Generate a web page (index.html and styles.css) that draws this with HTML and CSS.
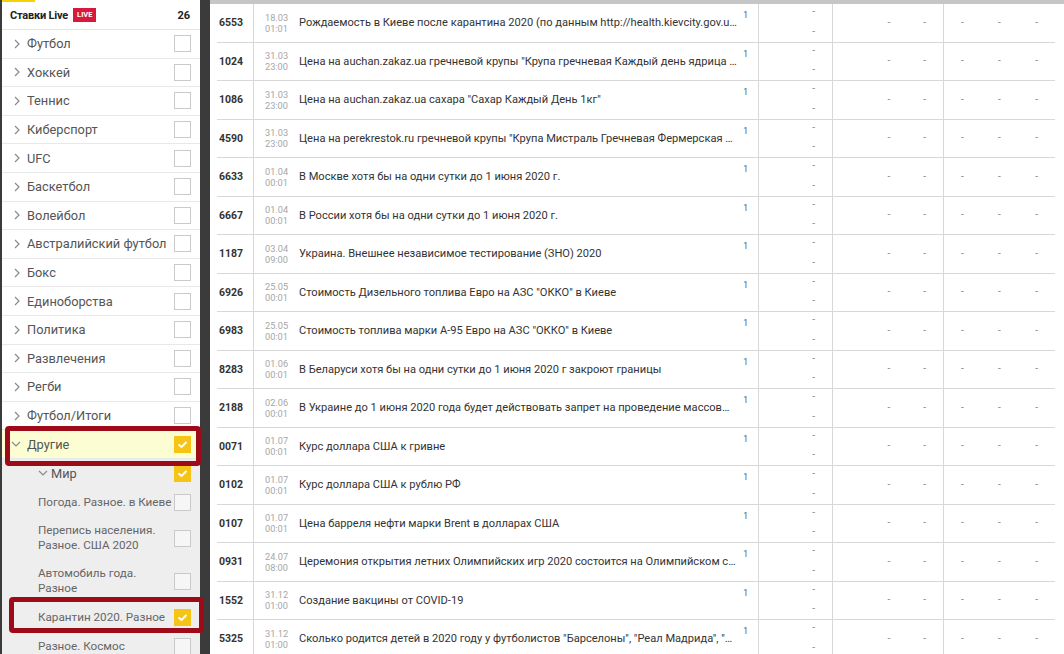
FILE: index.html
```html
<!DOCTYPE html>
<html lang="ru">
<head>
    <meta charset="UTF-8" />
    <title>Ставки Live</title>
    <link rel="stylesheet" href="styles.css">
</head>
<body>

    <aside class="sidebar">
        <div class="accent"></div>
        <div class="sb-head">
            <span class="sb-title">Ставки Live</span>
            <span class="live">LIVE</span>
            <span class="sb-count">26</span>
        </div>

        <ul class="sports" id="sports">
            <!-- Filled by JS -->
        </ul>

        <div class="mark mark-1"></div>
        <div class="mark mark-2"></div>
    </aside>

    <main class="events">
        <div class="rows" id="rows">
            <!-- Filled by JS -->
        </div>
    </main>

    <script>
    const arrowRight = '<svg class="chev" width="8" height="10" viewBox="0 0 8 10"><polyline points="2,1 6,5 2,9" fill="none" stroke="#8a8a8a" stroke-width="1.2"/></svg>';
    const arrowDown = '<svg class="chev" width="10" height="8" viewBox="0 0 10 8"><polyline points="1,2 5,6 9,2" fill="none" stroke="#8a8a8a" stroke-width="1.2"/></svg>';
    const tick = '<svg width="17" height="17" viewBox="0 0 17 17"><polyline points="4.5,8.5 7.5,11 12.5,6" fill="none" stroke="#fff" stroke-width="2"/></svg>';

    const sports = ["Футбол", "Хоккей", "Теннис", "Киберспорт", "UFC", "Баскетбол", "Волейбол",
      "Австралийский футбол", "Бокс", "Единоборства", "Политика", "Развлечения", "Регби", "Футбол/Итоги"];

    const subs = [
      { name: "Погода. Разное. в Киеве" },
      { name: "Перепись населения.<br>Разное. США 2020", tall: true },
      { name: "Автомобиль года.<br>Разное", tall: true },
      { name: "Карантин 2020. Разное", checked: true },
      { name: "Разное. Космос" }
    ];

    const events = [
      ["6553", "18.03", "01:01", "Рождаемость в Киеве после карантина 2020 (по данным http://health.kievcity.gov.ua)"],
      ["1024", "31.03", "23:00", "Цена на auchan.zakaz.ua гречневой крупы \"Крупа гречневая Каждый день ядрица 1кг\""],
      ["1086", "31.03", "23:00", "Цена на auchan.zakaz.ua сахара \"Сахар Каждый День 1кг\""],
      ["4590", "31.03", "23:00", "Цена на perekrestok.ru гречневой крупы \"Крупа Мистраль Гречневая Фермерская 900г\""],
      ["6633", "01.04", "00:01", "В Москве хотя бы на одни сутки до 1 июня 2020 г."],
      ["6667", "01.04", "00:01", "В России хотя бы на одни сутки до 1 июня 2020 г."],
      ["1187", "03.04", "09:00", "Украина. Внешнее независимое тестирование (ЗНО) 2020"],
      ["6926", "25.05", "00:01", "Стоимость Дизельного топлива Евро на АЗС \"ОККО\" в Киеве"],
      ["6983", "25.05", "00:01", "Стоимость топлива марки А-95 Евро на АЗС \"ОККО\" в Киеве"],
      ["8283", "01.06", "00:01", "В Беларуси хотя бы на одни сутки до 1 июня 2020 г закроют границы"],
      ["2188", "02.06", "00:01", "В Украине до 1 июня 2020 года будет действовать запрет на проведение массовых мероприятий"],
      ["0071", "01.07", "00:01", "Курс доллара США к гривне"],
      ["0102", "01.07", "00:01", "Курс доллара США к рублю РФ"],
      ["0107", "01.07", "00:01", "Цена барреля нефти марки Brent в долларах США"],
      ["0931", "24.07", "08:00", "Церемония открытия летних Олимпийских игр 2020 состоится на Олимпийском стадионе"],
      ["1552", "31.12", "01:00", "Создание вакцины от COVID-19"],
      ["5325", "31.12", "01:00", "Сколько родится детей в 2020 году у футболистов \"Барселоны\", \"Реал Мадрида\", \"Ювентуса\""]
    ];

    function box(checked) {
      return checked ? `<span class="check on">${tick}</span>` : '<span class="check"></span>';
    }

    function loadSidebar() {
      const list = document.getElementById("sports");
      let html = "";
      sports.forEach(name => {
        html += `<li class="sport">${arrowRight}<span class="label">${name}</span>${box(false)}</li>`;
      });
      html += `<li class="sport open">${arrowDown}<span class="label">Другие</span>${box(true)}</li>`;
      html += `<li class="sub world">${arrowDown}<span class="label">Мир</span>${box(true)}</li>`;
      subs.forEach(s => {
        html += `<li class="sub leaf${s.tall ? " tall" : ""}"><span class="label">${s.name}</span>${box(s.checked)}</li>`;
      });
      list.innerHTML = html;
    }

    function loadEvents() {
      const rows = document.getElementById("rows");
      events.forEach(ev => {
        const row = document.createElement("div");
        row.className = "row";
        row.innerHTML = `
          <div class="cell id">${ev[0]}</div>
          <div class="cell date">${ev[1]}<br>${ev[2]}</div>
          <div class="cell name"><span class="title">${ev[3]}</span><sup>1</sup></div>
          <div class="cell pair"><span>-</span><span>-</span></div>
          <div class="cell odds two"><span>-</span><span>-</span></div>
          <div class="cell odds three"><span>-</span><span>-</span><span>-</span></div>
        `;
        rows.appendChild(row);
      });
    }

    loadSidebar();
    loadEvents();
    </script>
</body>
</html>
```

FILE: styles.css
```css
* {
    box-sizing: border-box;
}

html, body {
    height: 654px;
    overflow: hidden;
}

body {
    margin: 0;
    display: flex;
    background-color: #3b3b3b;
    font-family: Roboto, "Liberation Sans", sans-serif;
    color: #333;
}

/* sidebar */

.sidebar {
    position: relative;
    width: 198px;
    margin-left: 2px;
    flex-shrink: 0;
    background-color: #fff;
}

.accent {
    width: 33px;
    height: 2px;
    background-color: #f6d200;
}

.sb-head {
    height: 28px;
    display: flex;
    align-items: center;
    padding: 0 10px 1px 8px;
    border-bottom: 1px solid #e6e6e6;
}

.sb-title {
    font-size: 11px;
    font-weight: bold;
    color: #222;
    letter-spacing: -0.2px;
}

.live {
    margin-left: 5px;
    background-color: #d8183d;
    color: #fff;
    font-size: 7.5px;
    font-weight: bold;
    padding: 2px 4px;
    line-height: 10px;
}

.sb-count {
    margin-left: auto;
    font-size: 11px;
    font-weight: bold;
    color: #222;
}

.sports {
    list-style: none;
    margin: 0;
    padding: 0;
}

.sport, .sub {
    display: flex;
    align-items: center;
    padding: 0 9px 0 11px;
    font-size: 12.8px;
    color: #555;
}

.sport {
    height: 28.6px;
    border-bottom: 1px solid #e8e8e8;
}

.chev {
    flex-shrink: 0;
}

.sport .chev {
    margin-right: 6px;
}

.label {
    flex: 1;
    min-width: 0;
    line-height: 15px;
    white-space: nowrap;
}

.check {
    flex-shrink: 0;
    width: 17px;
    height: 17px;
    border: 1px solid #cacaca;
    background-color: #fff;
}

.check svg {
    display: block;
}

.sport.open {
    background-color: #fdfdd4;
}

.sport.open .chev {
    margin-left: -2px;
}

.sub {
    background-color: #eeeeee;
    height: 29px;
}

.world {
    padding-left: 36px;
}

.world .chev {
    margin-right: 3px;
}

.leaf {
    padding-left: 36px;
    font-size: 11.7px;
    color: #666;
}

.leaf.tall {
    height: 43px;
}

.leaf .check {
    background-color: #f6f6f6;
}

.check.on,
.leaf .check.on {
    border: none;
    background-color: #f5c414;
}

.mark {
    position: absolute;
    border: 5px solid #9e0b18;
    border-radius: 4px;
}

.mark-1 {
    left: 3px;
    top: 426px;
    width: 196px;
    height: 40px;
}

.mark-2 {
    left: 7px;
    top: 597px;
    width: 195px;
    height: 36px;
}

/* events table */

.events {
    flex: 1;
    margin-left: 10px;
    background-color: #fff;
    border-top: 4px solid #c6c6c6;
}

.rows {
    margin-left: 7px;
    width: 838px;
}

.row {
    display: grid;
    grid-template-columns: 36px 37px 468px 74px 111px 112px;
    height: 38.5px;
    border-bottom: 1px solid #d8d8d8;
}

.cell {
    display: flex;
    align-items: center;
}

.id {
    padding-left: 2px;
    font-size: 10.5px;
    font-weight: bold;
    color: #333;
}

.date {
    border-left: 1px solid #d8d8d8;
    padding-left: 11px;
    font-size: 9.2px;
    line-height: 11px;
    color: #a6a6a6;
}

.name {
    padding: 0 10px 0 9px;
    font-size: 11.1px;
    color: #333;
    gap: 6px;
}

.title {
    flex: 1;
    white-space: nowrap;
    overflow: hidden;
    text-overflow: ellipsis;
}

.name sup {
    align-self: flex-start;
    margin-top: 6px;
    font-size: 8.5px;
    line-height: 10px;
    color: #555;
}

.pair, .odds {
    border-left: 1px solid #d8d8d8;
    font-size: 10px;
    line-height: 10px;
    color: #8a8a8a;
}

.pair {
    flex-direction: column;
    align-items: flex-end;
    justify-content: space-between;
    padding: 3px 17px 5px 0;
}

.two {
    justify-content: flex-end;
    gap: 33px;
    padding-right: 17px;
}

.three {
    justify-content: space-between;
    padding: 0 17px 0 17px;
}
```
